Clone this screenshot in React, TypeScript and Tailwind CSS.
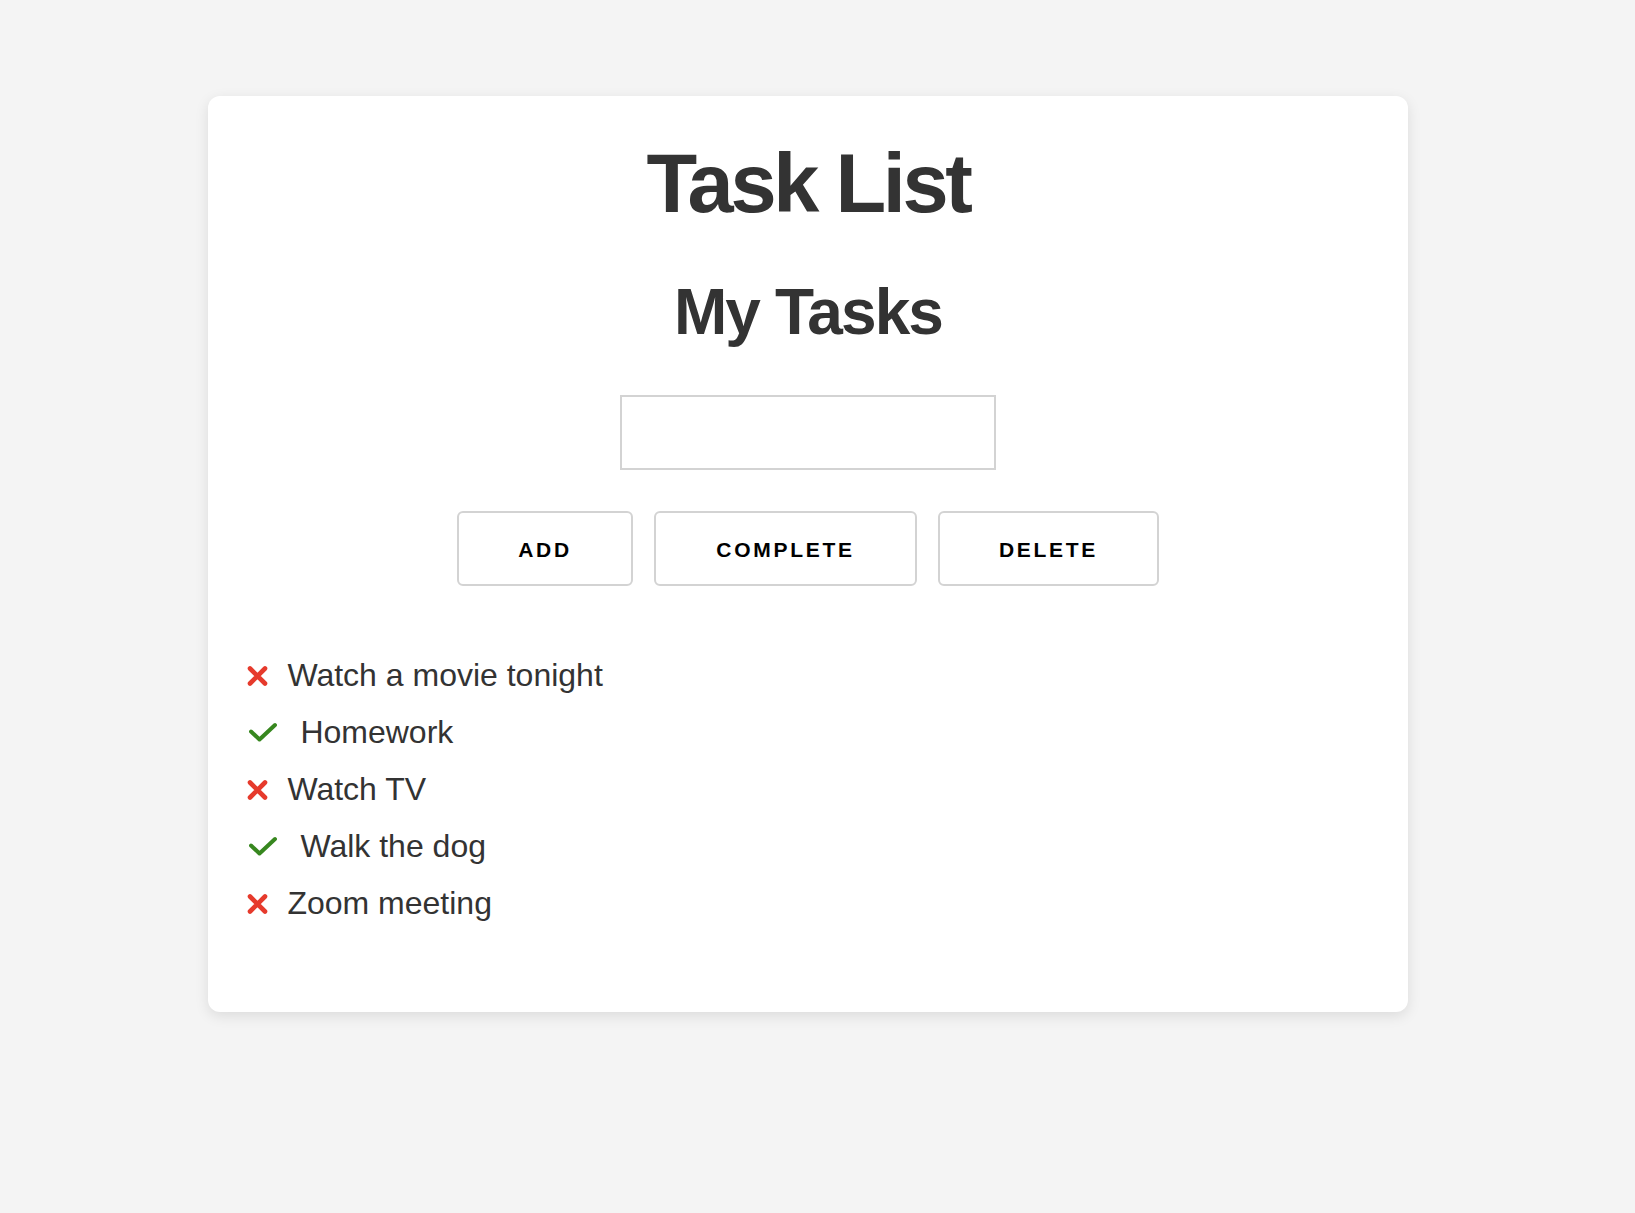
import React from "react";

const tasks: { text: string; done: boolean }[] = [
  { text: "Watch a movie tonight", done: false },
  { text: "Homework", done: true },
  { text: "Watch TV", done: false },
  { text: "Walk the dog", done: true },
  { text: "Zoom meeting", done: false },
];

function XIcon() {
  return (
    <svg width="21" height="20" viewBox="0 0 21 20" className="shrink-0 mr-[19.4px]">
      <path d="M3 2.5 L18 17.5 M18 2.5 L3 17.5" stroke="#e63a2c" strokeWidth="4.6" strokeLinecap="round" fill="none" />
    </svg>
  );
}

function CheckIcon() {
  return (
    <svg width="28" height="21" viewBox="0 0 28 21" className="shrink-0 ml-[2px] mr-[23.4px]">
      <polyline points="2,9.5 10.5,17.5 26,3" stroke="#37871f" strokeWidth="4" strokeLinecap="round" strokeLinejoin="round" fill="none" />
    </svg>
  );
}

export default function App() {
  return (
    <div className="min-h-[1213px] bg-[#f4f4f4] pl-[208px] pt-[96px] font-['Liberation_Sans',Arial,sans-serif]">
      <div className="w-[1200px] h-[916px] bg-white rounded-[12px] shadow-[0_4px_14px_rgba(0,0,0,0.1)] flex flex-col items-center pt-[45.7px]">
        <h1 className="text-[83px] leading-none font-bold tracking-[-0.041em] text-[#333] h-[83px]">Task List</h1>
        <h2 className="mt-[55px] text-[64px] leading-none font-bold tracking-[-0.03em] text-[#333] h-[64px]">My Tasks</h2>
        <input
          type="text"
          className="mt-[51px] w-[376px] h-[75px] border-2 border-[#d3d3d3] bg-white outline-none px-3 text-[20px]"
        />
        <div className="mt-[41px] flex gap-[21px]">
          <button className="w-[176px] h-[75px] border-2 border-[#d3d3d3] rounded-[6px] bg-white text-black font-bold text-[21px] tracking-[2.7px] pt-[4px]">
            ADD
          </button>
          <button className="w-[263px] h-[75px] border-2 border-[#d3d3d3] rounded-[6px] bg-white text-black font-bold text-[21px] tracking-[2.7px] pt-[4px]">
            COMPLETE
          </button>
          <button className="w-[221px] h-[75px] border-2 border-[#d3d3d3] rounded-[6px] bg-white text-black font-bold text-[21px] tracking-[2.7px] pt-[4px]">
            DELETE
          </button>
        </div>
        <ul className="mt-[61.4px] self-stretch pl-[39px]">
          {tasks.map((t) => (
            <li key={t.text} className="flex items-center h-[57px] text-[32px] leading-[57px] text-[#333]">
              {t.done ? <CheckIcon /> : <XIcon />}
              <span>{t.text}</span>
            </li>
          ))}
        </ul>
      </div>
    </div>
  );
}
